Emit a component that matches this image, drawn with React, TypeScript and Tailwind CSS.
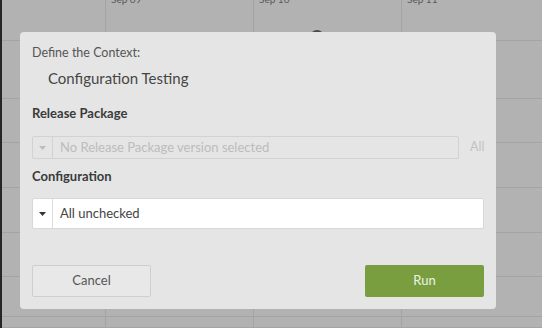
const rows = ["h-[41px]", "h-[58px]", "h-[44px]", "h-[45px]", "h-[45px]", "h-[44px]", "h-[40px]", "flex-1"];
const cols = ["w-[104px]", "w-[148px]", "w-[148px]", "flex-1"];
const dates = ["", "Sep 09", "Sep 10", "Sep 11"];

function Caret({ className }: { className: string }) {
    return (
        <svg width="7" height="4" viewBox="0 0 7 4" className={className}>
            <path d="M0 0h7L3.5 4z" fill="currentColor" />
        </svg>
    );
}

export default function App() {
    return (
        <div
            className="relative flex h-[328px] w-[542px] overflow-hidden bg-[#b2b2b2]"
            style={{ fontFamily: "Lato, 'Open Sans', sans-serif" }}
        >
            <div className="w-[2px] bg-[#262626]" />

            {/* calendar behind the overlay */}
            <div className="flex flex-1 flex-col">
                {rows.map((r, i) => (
                    <div key={i} className={`flex ${r} border-b border-[#a4a4a4]`}>
                        {cols.map((c, j) => (
                            <div key={j} className={`${c} border-r border-[#a4a4a4] last:border-r-0`}>
                                {i === 0 && dates[j] && (
                                    <div className="-mt-[8px] pl-[5px] text-[10px] text-[#5a5a5a]">{dates[j]}</div>
                                )}
                            </div>
                        ))}
                    </div>
                ))}
            </div>

            <div className="absolute left-[310px] top-[30px] h-[14px] w-[14px] rounded-full bg-[#4a4a4a]" />

            {/* modal */}
            <div className="absolute left-[20px] top-[32px] flex h-[277px] w-[476px] flex-col rounded-[4px] bg-[#e5e5e5] px-[12px] pt-[13px]">
                <div className="text-[12.5px] leading-[16px] text-[#555]">Define the Context:</div>
                <div className="mt-[7px] pl-[16px] text-[15px] leading-[20px] text-[#454545]">Configuration Testing</div>

                <div className="mt-[17px] text-[13px] font-bold leading-[16px] text-[#3a3a3a]">Release Package</div>
                <div className="mt-[15px] flex items-center">
                    <div className="flex h-[23px] flex-1 items-center rounded-[2px] border border-[#d2d2d2] bg-[#e5e5e5]">
                        <div className="flex h-full w-[20px] items-center justify-center border-r border-[#d2d2d2]">
                            <Caret className="text-[#bdbdbd]" />
                        </div>
                        <span className="pl-[7px] text-[13px] text-[#bcbcbc]">No Release Package version selected</span>
                    </div>
                    <span className="w-[25px] pl-[11px] text-[12.5px] text-[#c2c2c2]">All</span>
                </div>

                <div className="mt-[9px] text-[13px] font-bold leading-[16px] text-[#3a3a3a]">Configuration</div>
                <div className="mt-[14px] flex h-[31px] items-center rounded-[2px] border border-[#d8d8d8] bg-white">
                    <div className="flex h-full w-[20px] items-center justify-center border-r border-[#dcdcdc]">
                        <Caret className="text-[#333]" />
                    </div>
                    <span className="pl-[7px] text-[13px] text-[#444]">All unchecked</span>
                </div>

                <div className="mt-auto mb-[12px] flex justify-between">
                    <button className="h-[32px] w-[119px] rounded-[2px] border border-[#cfcfcf] bg-[#e8e8e8] text-[13px] text-[#555]">
                        Cancel
                    </button>
                    <button className="h-[32px] w-[119px] rounded-[2px] bg-[#799e40] text-[13px] text-[#eef3e4]">
                        Run
                    </button>
                </div>
            </div>
        </div>
    );
}
